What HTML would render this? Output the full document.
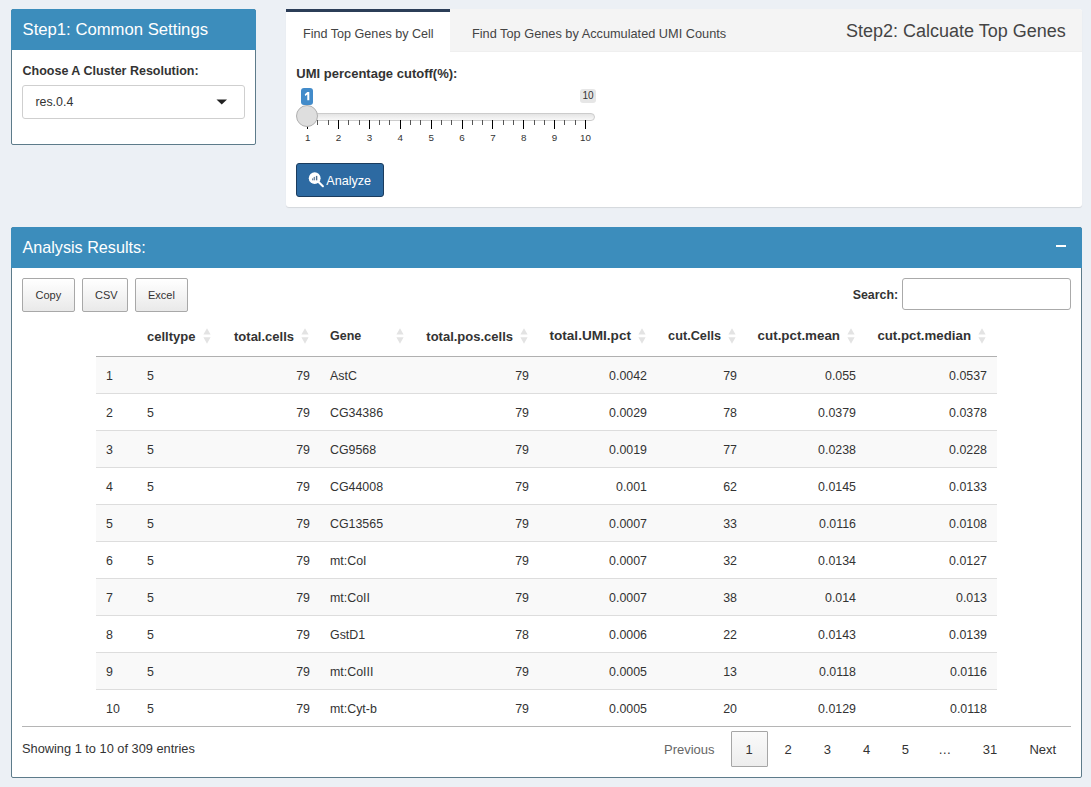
<!DOCTYPE html>
<html><head><meta charset="utf-8">
<style>
*{box-sizing:border-box;margin:0;padding:0}
html,body{width:1091px;height:787px;overflow:hidden;background:#ecf0f5;font-family:"Liberation Sans",sans-serif;color:#333}
.a{position:absolute;white-space:pre;line-height:1}
.box{position:absolute;background:#fff;border-radius:3px}
.hdr{position:absolute;background:#3c8dbc}
.btn{position:absolute;border:1px solid #a8a8a8;border-radius:2px;background:linear-gradient(#fff,#e9e9e9);}
.tick{position:absolute;width:1px;background:#000}
.tl{position:absolute;font-size:9.8px;line-height:1;width:20px;text-align:center;color:#333}
.row{position:absolute;left:96px;width:901px;height:37px;border-bottom:1px solid #ddd}
.row.o{background:#f9f9f9}
.row span{position:absolute;top:13px;font-size:12.4px;line-height:1;white-space:pre}
.r{text-align:right}
.th{position:absolute;top:329.5px;font-size:13px;font-weight:bold;line-height:1;white-space:pre}
.sort{position:absolute;width:8px;height:16px;top:328px}
.pg{position:absolute;top:743px;font-size:13px;line-height:1;white-space:pre;color:#333}
</style></head><body>

<!-- Box 1 -->
<div class="box" style="left:11px;top:9px;width:245px;height:136px;border:1px solid #5d7b8a;border-radius:2px"></div>
<div class="hdr" style="left:11px;top:9px;width:245px;height:41px;border-radius:3px 3px 0 0"></div>
<div class="a" style="left:22.5px;top:22px;font-size:16.7px;color:#fff">Step1: Common Settings</div>
<div class="a" style="left:22.5px;top:64.6px;font-size:12.5px;font-weight:bold">Choose A Cluster Resolution:</div>
<div style="position:absolute;left:22px;top:85px;width:223px;height:34px;border:1px solid #cfcfcf;border-radius:3px;background:#fff"></div>
<div class="a" style="left:35.4px;top:96px;font-size:12.4px">res.0.4</div>
<svg style="position:absolute;left:216px;top:99px" width="12" height="6"><path d="M0.5 0.5 L11 0.5 L5.75 5.5 Z" fill="#222"/></svg>

<!-- Tab box -->
<div class="box" style="left:286px;top:9px;width:796px;height:198px;box-shadow:0 1px 1px rgba(0,0,0,0.1)"></div>
<div style="position:absolute;left:286px;top:9px;width:796px;height:43px;background:#f4f4f4;border-radius:3px 3px 0 0;border-bottom:1px solid #efefef"></div>
<div style="position:absolute;left:286px;top:9px;width:164px;height:44px;background:#fff;border-top:3px solid #2b3d57"></div>
<div class="a" style="left:303px;top:27.8px;font-size:12.6px;color:#444">Find Top Genes by Cell</div>
<div class="a" style="left:472px;top:27.8px;font-size:12.75px;color:#444">Find Top Genes by Accumulated UMI Counts</div>
<div class="a" style="left:846px;top:21.8px;font-size:18px;color:#444">Step2: Calcuate Top Genes</div>
<div class="a" style="left:296.3px;top:66.7px;font-size:13px;font-weight:bold">UMI percentage cutoff(%):</div>

<!-- slider -->
<div style="position:absolute;left:297px;top:112.5px;width:298px;height:8.5px;border:1px solid #ccc;border-radius:8px;background:linear-gradient(#e4e4e4,#f8f8f8)"></div>
<div class="tick" style="left:307.20px;top:120px;height:9px"></div>
<div class="tl" style="left:297.70px;top:133.2px">1</div>
<div class="tick" style="left:317.49px;top:120px;height:5px;background:#555"></div>
<div class="tick" style="left:327.77px;top:120px;height:5px;background:#555"></div>
<div class="tick" style="left:338.06px;top:120px;height:9px"></div>
<div class="tl" style="left:328.56px;top:133.2px">2</div>
<div class="tick" style="left:348.35px;top:120px;height:5px;background:#555"></div>
<div class="tick" style="left:358.63px;top:120px;height:5px;background:#555"></div>
<div class="tick" style="left:368.92px;top:120px;height:9px"></div>
<div class="tl" style="left:359.42px;top:133.2px">3</div>
<div class="tick" style="left:379.21px;top:120px;height:5px;background:#555"></div>
<div class="tick" style="left:389.49px;top:120px;height:5px;background:#555"></div>
<div class="tick" style="left:399.78px;top:120px;height:9px"></div>
<div class="tl" style="left:390.28px;top:133.2px">4</div>
<div class="tick" style="left:410.07px;top:120px;height:5px;background:#555"></div>
<div class="tick" style="left:420.35px;top:120px;height:5px;background:#555"></div>
<div class="tick" style="left:430.64px;top:120px;height:9px"></div>
<div class="tl" style="left:421.14px;top:133.2px">5</div>
<div class="tick" style="left:440.93px;top:120px;height:5px;background:#555"></div>
<div class="tick" style="left:451.21px;top:120px;height:5px;background:#555"></div>
<div class="tick" style="left:461.50px;top:120px;height:9px"></div>
<div class="tl" style="left:452.00px;top:133.2px">6</div>
<div class="tick" style="left:471.79px;top:120px;height:5px;background:#555"></div>
<div class="tick" style="left:482.07px;top:120px;height:5px;background:#555"></div>
<div class="tick" style="left:492.36px;top:120px;height:9px"></div>
<div class="tl" style="left:482.86px;top:133.2px">7</div>
<div class="tick" style="left:502.65px;top:120px;height:5px;background:#555"></div>
<div class="tick" style="left:512.93px;top:120px;height:5px;background:#555"></div>
<div class="tick" style="left:523.22px;top:120px;height:9px"></div>
<div class="tl" style="left:513.72px;top:133.2px">8</div>
<div class="tick" style="left:533.51px;top:120px;height:5px;background:#555"></div>
<div class="tick" style="left:543.79px;top:120px;height:5px;background:#555"></div>
<div class="tick" style="left:554.08px;top:120px;height:9px"></div>
<div class="tl" style="left:544.58px;top:133.2px">9</div>
<div class="tick" style="left:564.37px;top:120px;height:5px;background:#555"></div>
<div class="tick" style="left:574.65px;top:120px;height:5px;background:#555"></div>
<div class="tick" style="left:584.94px;top:120px;height:9px"></div>
<div class="tl" style="left:575.44px;top:133.2px">10</div>
<div style="position:absolute;left:295.7px;top:104.8px;width:22px;height:22px;border:1px solid #b0b0b0;border-radius:50%;background:#dedede"></div>
<div style="position:absolute;left:301px;top:88px;width:12px;height:16.5px;background:#428bca;border-radius:3px"></div><svg style="position:absolute;left:301px;top:88px" width="12" height="17"><path d="M6.3 4 L8.3 4 L8.3 12.2 L6.3 12.2 L6.3 6.6 L4.2 7.9 L3.8 6.2 Z" fill="#fff"/></svg>
<div style="position:absolute;left:580px;top:88.5px;width:16px;height:14px;background:#e6e6e6;border-radius:3px;color:#333;font-size:10px;line-height:14px;text-align:center">10</div>

<!-- Analyze button -->
<div style="position:absolute;left:296px;top:163px;width:88px;height:34px;background:#2d6aa2;border:1px solid #1b3c5e;border-radius:3px"></div>
<svg style="position:absolute;left:307px;top:171px" width="20" height="18" viewBox="0 0 20 18">
<circle cx="7.7" cy="7.2" r="5.9" fill="#fff"/>
<line x1="11.3" y1="10.8" x2="15.9" y2="15.2" stroke="#fff" stroke-width="2.1" stroke-linecap="round"/>
<rect x="5.2" y="7.4" width="1" height="1.9" fill="#4b6b8c"/><rect x="6.7" y="5.9" width="1.1" height="3.4" fill="#4b6b8c"/><rect x="8.9" y="4.9" width="1.4" height="4.4" fill="#4b6b8c"/>
</svg>
<div class="a" style="left:326.3px;top:175px;font-size:12.6px;color:#fff">Analyze</div>

<!-- Box 2 -->
<div class="box" style="left:11px;top:227px;width:1071px;height:551px;border:1px solid #5d7b8a;border-radius:2px"></div>
<div class="hdr" style="left:11px;top:227px;width:1071px;height:41px;border-radius:3px 3px 0 0"></div>
<div class="a" style="left:22.4px;top:239px;font-size:16.2px;color:#fff">Analysis Results:</div>
<div style="position:absolute;left:1056px;top:245px;width:10px;height:2px;background:#fff"></div>

<div class="btn" style="left:22px;top:278px;width:53px;height:34px"></div>
<div class="btn" style="left:82px;top:278px;width:46px;height:34px"></div>
<div class="btn" style="left:135px;top:278px;width:53px;height:34px"></div>
<div class="a" style="left:35.5px;top:289.7px;font-size:11px">Copy</div>
<div class="a" style="left:95px;top:289.7px;font-size:11px">CSV</div>
<div class="a" style="left:148px;top:289.7px;font-size:11px">Excel</div>

<div class="a" style="left:852.7px;top:288.7px;font-size:12.4px;font-weight:bold">Search:</div>
<div style="position:absolute;left:902px;top:278px;width:169px;height:32px;border:1px solid #aaa;border-radius:3px;background:#fff"></div>

<!-- table header -->
<div class="th" style="left:147px;font-size:13px;top:329.50px">celltype</div>
<svg class="sort" style="left:202.7px" width="8" height="16"><path d="M4 0.2 L7.6 6.5 L0.4 6.5 Z M4 15.8 L7.6 9.2 L0.4 9.2 Z" fill="#e3e3e3"/></svg>
<div class="th" style="right:797px;font-size:13px;top:329.50px">total.cells</div>
<svg class="sort" style="left:300.7px" width="8" height="16"><path d="M4 0.2 L7.6 6.5 L0.4 6.5 Z M4 15.8 L7.6 9.2 L0.4 9.2 Z" fill="#e3e3e3"/></svg>
<div class="th" style="left:330px;font-size:12.5px;top:329.92px">Gene</div>
<svg class="sort" style="left:395.7px" width="8" height="16"><path d="M4 0.2 L7.6 6.5 L0.4 6.5 Z M4 15.8 L7.6 9.2 L0.4 9.2 Z" fill="#e3e3e3"/></svg>
<div class="th" style="right:578px;font-size:13px;top:329.50px">total.pos.cells</div>
<svg class="sort" style="left:519.7px" width="8" height="16"><path d="M4 0.2 L7.6 6.5 L0.4 6.5 Z M4 15.8 L7.6 9.2 L0.4 9.2 Z" fill="#e3e3e3"/></svg>
<div class="th" style="right:460px;font-size:13.6px;top:328.99px">total.UMI.pct</div>
<svg class="sort" style="left:637.7px" width="8" height="16"><path d="M4 0.2 L7.6 6.5 L0.4 6.5 Z M4 15.8 L7.6 9.2 L0.4 9.2 Z" fill="#e3e3e3"/></svg>
<div class="th" style="right:370px;font-size:12.7px;top:329.75px">cut.Cells</div>
<svg class="sort" style="left:727.7px" width="8" height="16"><path d="M4 0.2 L7.6 6.5 L0.4 6.5 Z M4 15.8 L7.6 9.2 L0.4 9.2 Z" fill="#e3e3e3"/></svg>
<div class="th" style="right:251px;font-size:13.36px;top:329.19px">cut.pct.mean</div>
<svg class="sort" style="left:846.7px" width="8" height="16"><path d="M4 0.2 L7.6 6.5 L0.4 6.5 Z M4 15.8 L7.6 9.2 L0.4 9.2 Z" fill="#e3e3e3"/></svg>
<div class="th" style="right:120px;font-size:13.28px;top:329.26px">cut.pct.median</div>
<svg class="sort" style="left:977.7px" width="8" height="16"><path d="M4 0.2 L7.6 6.5 L0.4 6.5 Z M4 15.8 L7.6 9.2 L0.4 9.2 Z" fill="#e3e3e3"/></svg>
<div style="position:absolute;left:96px;top:356px;width:901px;height:1px;background:#b0b0b0"></div>
<div class="row o" style="top:357px"><span style="left:10px">1</span><span style="left:51px">5</span><span style="right:687px">79</span><span style="left:234px">AstC</span><span style="right:468px">79</span><span style="right:350px">0.0042</span><span style="right:260px">79</span><span style="right:141px">0.055</span><span style="right:10px">0.0537</span></div>
<div class="row" style="top:394px"><span style="left:10px">2</span><span style="left:51px">5</span><span style="right:687px">79</span><span style="left:234px">CG34386</span><span style="right:468px">79</span><span style="right:350px">0.0029</span><span style="right:260px">78</span><span style="right:141px">0.0379</span><span style="right:10px">0.0378</span></div>
<div class="row o" style="top:431px"><span style="left:10px">3</span><span style="left:51px">5</span><span style="right:687px">79</span><span style="left:234px">CG9568</span><span style="right:468px">79</span><span style="right:350px">0.0019</span><span style="right:260px">77</span><span style="right:141px">0.0238</span><span style="right:10px">0.0228</span></div>
<div class="row" style="top:468px"><span style="left:10px">4</span><span style="left:51px">5</span><span style="right:687px">79</span><span style="left:234px">CG44008</span><span style="right:468px">79</span><span style="right:350px">0.001</span><span style="right:260px">62</span><span style="right:141px">0.0145</span><span style="right:10px">0.0133</span></div>
<div class="row o" style="top:505px"><span style="left:10px">5</span><span style="left:51px">5</span><span style="right:687px">79</span><span style="left:234px">CG13565</span><span style="right:468px">79</span><span style="right:350px">0.0007</span><span style="right:260px">33</span><span style="right:141px">0.0116</span><span style="right:10px">0.0108</span></div>
<div class="row" style="top:542px"><span style="left:10px">6</span><span style="left:51px">5</span><span style="right:687px">79</span><span style="left:234px">mt:CoI</span><span style="right:468px">79</span><span style="right:350px">0.0007</span><span style="right:260px">32</span><span style="right:141px">0.0134</span><span style="right:10px">0.0127</span></div>
<div class="row o" style="top:579px"><span style="left:10px">7</span><span style="left:51px">5</span><span style="right:687px">79</span><span style="left:234px">mt:CoII</span><span style="right:468px">79</span><span style="right:350px">0.0007</span><span style="right:260px">38</span><span style="right:141px">0.014</span><span style="right:10px">0.013</span></div>
<div class="row" style="top:616px"><span style="left:10px">8</span><span style="left:51px">5</span><span style="right:687px">79</span><span style="left:234px">GstD1</span><span style="right:468px">78</span><span style="right:350px">0.0006</span><span style="right:260px">22</span><span style="right:141px">0.0143</span><span style="right:10px">0.0139</span></div>
<div class="row o" style="top:653px"><span style="left:10px">9</span><span style="left:51px">5</span><span style="right:687px">79</span><span style="left:234px">mt:CoIII</span><span style="right:468px">79</span><span style="right:350px">0.0005</span><span style="right:260px">13</span><span style="right:141px">0.0118</span><span style="right:10px">0.0116</span></div>
<div class="row" style="top:690px"><span style="left:10px">10</span><span style="left:51px">5</span><span style="right:687px">79</span><span style="left:234px">mt:Cyt-b</span><span style="right:468px">79</span><span style="right:350px">0.0005</span><span style="right:260px">20</span><span style="right:141px">0.0129</span><span style="right:10px">0.0118</span></div>
<div style="position:absolute;left:22px;top:726px;width:1049px;height:1px;background:#b5b5b5"></div>

<div class="a" style="left:22px;top:743px;font-size:12.8px">Showing 1 to 10 of 309 entries</div>
<div class="pg" style="left:664px;color:#666">Previous</div>
<div style="position:absolute;left:731px;top:731px;width:37px;height:36px;border:1px solid #a6a6a6;border-radius:1px;background:linear-gradient(#fafafa,#ededed)"></div>
<div class="pg" style="left:729px;width:40px;text-align:center">1</div>
<div class="pg" style="left:768px;width:40px;text-align:center">2</div>
<div class="pg" style="left:807.3px;width:40px;text-align:center">3</div>
<div class="pg" style="left:846.5px;width:40px;text-align:center">4</div>
<div class="pg" style="left:885.4px;width:40px;text-align:center">5</div>
<div class="pg" style="left:924.7px;width:40px;text-align:center">…</div>
<div class="pg" style="left:970.1px;width:40px;text-align:center">31</div>
<div class="pg" style="left:1029.4px">Next</div>

</body></html>
